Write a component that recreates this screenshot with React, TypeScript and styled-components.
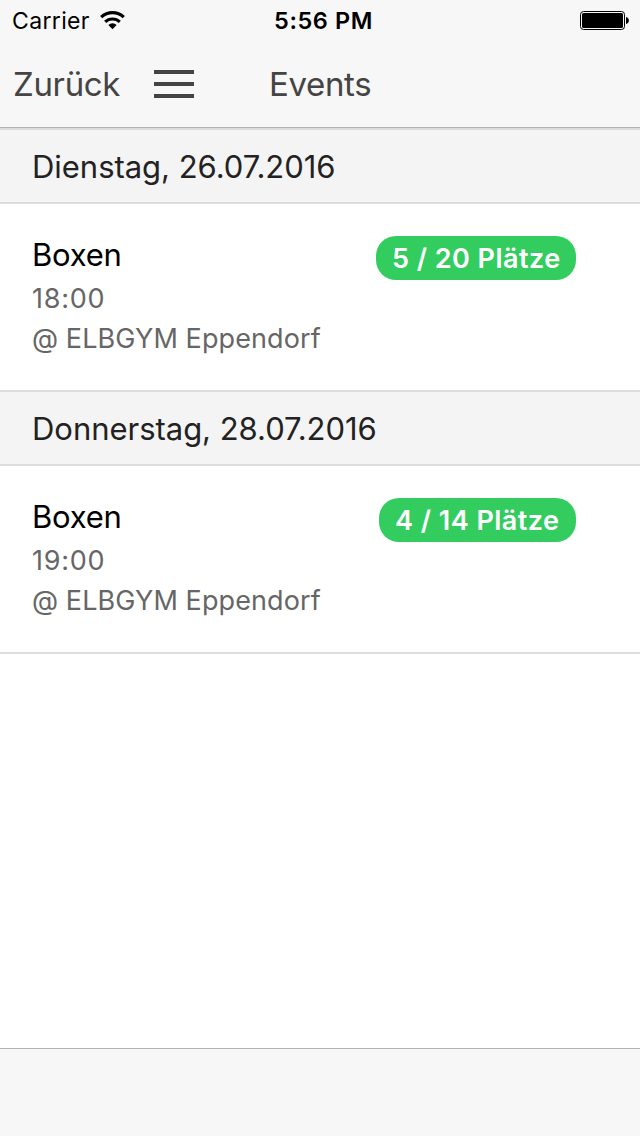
import React from 'react';
import styled, { createGlobalStyle } from 'styled-components';

const Global = createGlobalStyle`
  *, *::before, *::after { box-sizing: border-box; }
  html, body { margin: 0; padding: 0; }
  body { background: #fff; font-family: Inter, 'Liberation Sans', sans-serif; color: #000; }
`;

const Screen = styled.div`
  width: 640px;
  height: 1136px;
  display: flex;
  flex-direction: column;
  overflow: hidden;
  background: #fff;
`;

const Header = styled.header`
  flex: none;
  height: 128px;
  background: #f7f7f7;
  border-bottom: 1px solid #b2b2b2;
`;

const StatusBar = styled.div`
  height: 41px;
  display: grid;
  grid-template-columns: 1fr auto 1fr;
  align-items: center;
  padding: 0 11px 0 12px;
`;

const Carrier = styled.div`
  display: flex;
  align-items: center;
  gap: 10px;
`;

const Battery = styled.svg`
  justify-self: end;
`;

const NavBar = styled.nav`
  height: 86px;
  display: flex;
  align-items: center;
  padding-left: 13px;
`;

const Label = styled.span<{
  $size: number;
  $width: number;
  $weight?: number;
  $color?: string;
  $line?: number;
  $spacing?: number;
  $top?: number;
}>`
  display: block;
  width: ${(p) => p.$width}px;
  padding-top: ${(p) => p.$top ?? 0}px;
  font-size: ${(p) => p.$size}px;
  font-weight: ${(p) => p.$weight ?? 400};
  letter-spacing: ${(p) => p.$spacing ?? 0}px;
  color: ${(p) => p.$color ?? '#000'};
  line-height: ${(p) => p.$line ?? 40}px;
  white-space: nowrap;
`;

const MenuIcon = styled.svg`
  margin: 0 75px 0 34px;
`;

const Content = styled.main`
  flex: 1;
`;

const DayHeading = styled.h2`
  margin: 0;
  height: 76px;
  padding: 0 32px;
  display: flex;
  align-items: center;
  background: #f4f4f4;
  border-top: 2px solid #ddd;
  border-bottom: 2px solid #ddd;
`;

const EventRow = styled.article`
  height: 186px;
  display: flex;
  justify-content: space-between;
  align-items: flex-start;
  padding: 32px 64px 0 32px;
`;

const Badge = styled.span<{ $width: number }>`
  width: ${(p) => p.$width}px;
  height: 44px;
  display: flex;
  justify-content: center;
  border-radius: 20px;
  background: #33cd5f;
`;

const Footer = styled.footer`
  flex: none;
  height: 88px;
  background: #f7f7f7;
  border-top: 1px solid #b2b2b2;
`;

const EndLine = styled.div`
  height: 2px;
  background: #ddd;
`;

const events = [
  { day: 'Dienstag, 26.07.2016', dayWidth: 304, time: '18:00', places: '5 / 20 Plätze', badge: 200 },
  { day: 'Donnerstag, 28.07.2016', dayWidth: 344, time: '19:00', places: '4 / 14 Plätze', badge: 197 },
];

export default function App() {
  return (
    <Screen>
      <Global />
      <Header>
        <StatusBar>
          <Carrier>
            <Label $size={23} $width={78} $spacing={0.35} $top={1}>Carrier</Label>
            <svg width="25" height="19" viewBox="0 0 25 19" fill="none" stroke="#000" strokeWidth="3.2">
              <path d="M1.2 6.2a16.5 16.5 0 0 1 22.6 0" />
              <path d="M5.2 10.9a10.6 10.6 0 0 1 14.6 0" />
              <path d="M12.5 18.2l-4.1-4.2a5.8 5.8 0 0 1 8.2 0z" fill="#000" stroke="none" />
            </svg>
          </Carrier>
          <Label $size={23.5} $width={93} $weight={600} $spacing={0.6} $top={1}>5:56 PM</Label>
          <Battery width="49" height="19" viewBox="0 0 49 19">
            <rect x="0.5" y="0.5" width="44" height="18" rx="3" fill="none" stroke="#000" />
            <rect x="2" y="2" width="41" height="15" rx="1.5" />
            <path d="M46 6c3.8 0.6 3.8 6.4 0 7z" />
          </Battery>
        </StatusBar>
        <NavBar>
          <Label $size={33} $width={107} $color="#444" $spacing={-0.35} $line={39}>Zurück</Label>
          <MenuIcon width="40" height="28" viewBox="0 0 40 28" fill="#444">
            <path d="M0 0h40v4H0zM0 12h40v4H0zM0 24h40v4H0z" />
          </MenuIcon>
          <Label $size={33} $width={102} $color="#444" $spacing={-0.35} $line={39}>Events</Label>
        </NavBar>
      </Header>
      <Content>
        {events.map((e) => (
          <React.Fragment key={e.day}>
            <DayHeading>
              <Label $size={31} $width={e.dayWidth} $color="#222" $spacing={-0.03} $top={1}>{e.day}</Label>
            </DayHeading>
            <EventRow>
              <div>
                <Label $size={31} $width={90} $spacing={-0.25} $line={38}>Boxen</Label>
                <Label $size={27} $width={74} $color="#666" $spacing={0.75} $top={5}>{e.time}</Label>
                <Label $size={27} $width={290} $color="#666" $spacing={0.1}>@ ELBGYM Eppendorf</Label>
              </div>
              <Badge $width={e.badge}>
                <Label $size={27} $width={e.badge - 32} $weight={600} $color="#fff" $line={44} $spacing={0.48} $top={1}>{e.places}</Label>
              </Badge>
            </EventRow>
          </React.Fragment>
        ))}
        <EndLine />
      </Content>
      <Footer />
    </Screen>
  );
}
